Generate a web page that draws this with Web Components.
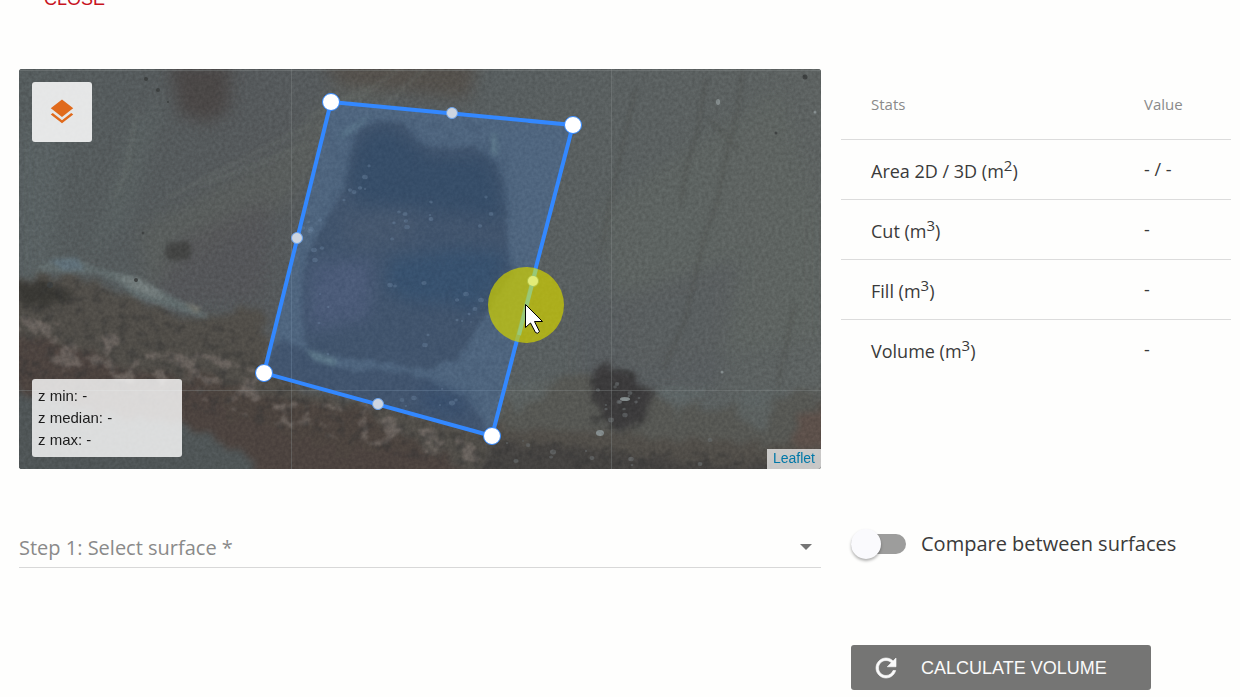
<!DOCTYPE html>
<html lang="en">
<head>
<meta charset="utf-8">
<meta name="viewport" content="width=device-width, initial-scale=1">
<title>Volume calculation</title>
<style>
  html {
    height: 100%;
    overflow: hidden;
  }
  body {
    margin: 0;
    background: #fefefd;
    color: #3a3a3a;
    font-family: "Open Sans", "Noto Sans", sans-serif;
    font-size: 18px;
  }
</style>
</head>
<body>

<volume-page>
  <flat-button slot="header" variant="text">Close</flat-button>
  <survey-map slot="map"></survey-map>
  <volume-stats slot="stats"></volume-stats>
  <surface-select slot="surface" label="Step 1: Select surface *"></surface-select>
  <toggle-switch slot="options">Compare between surfaces</toggle-switch>
  <flat-button slot="actions" variant="raised">
    <svg slot="icon" viewBox="0 0 24 24" width="30" height="30" fill="currentColor" stroke="currentColor" stroke-width=".5" aria-hidden="true">
      <path d="M17.65 6.35C16.2 4.9 14.21 4 12 4c-4.42 0-7.99 3.58-7.99 8s3.57 8 7.99 8c3.73 0 6.84-2.55 7.73-6h-2.08c-.82 2.33-3.04 4-5.65 4-3.31 0-6-2.69-6-6s2.69-6 6-6c1.66 0 3.14.69 4.22 1.78L13 11h7V4l-2.35 2.35z"/>
    </svg>
    Calculate volume
  </flat-button>
</volume-page>

<script>
class BaseElement extends HTMLElement {
  constructor() {
    super();
    this.attachShadow({mode: 'open'});
    this.shadowRoot.innerHTML = this.template();
  }

  template() {
    return '<slot></slot>';
  }
}

class VolumePage extends BaseElement {
  template() {
    return `<style>
      :host {
        display: grid;
        grid-template-columns: minmax(0, 1fr) 390px;
        column-gap: 20px;
        padding: 0 9px 0 19px;
      }
      /* the dialog is scrolled, so its header is partly out of view */
      header {
        grid-column: 1 / -1;
        margin: -24px 0 48px;
      }
      .form {
        padding-top: 50px;
      }
      .options {
        display: flex;
        flex-direction: column;
        align-items: flex-start;
        gap: 76px;
        padding: 50px 0 0 10px;
      }
    </style>
    <header><slot name="header"></slot></header>
    <slot name="map"></slot>
    <slot name="stats"></slot>
    <div class="form"><slot name="surface"></slot></div>
    <div class="options">
      <slot name="options"></slot>
      <slot name="actions"></slot>
    </div>`;
  }
}
window.customElements.define('volume-page', VolumePage);

class FlatButton extends BaseElement {
  template() {
    return `<style>
      :host {
        display: inline-block;
      }
      button {
        display: flex;
        align-items: center;
        gap: 20px;
        box-sizing: border-box;
        width: 100%;
        height: 45px;
        padding: 0 25px;
        border: 0;
        border-radius: 3px;
        background: none;
        color: #c8141e;
        font: 18px "Liberation Sans", Arial, sans-serif;
        text-transform: uppercase;
        cursor: pointer;
      }
      span {
        padding-top: 2px;
      }
      :host([variant="raised"]) {
        width: 300px;
      }
      :host([variant="raised"]) button {
        padding: 0 20px;
        background: #757574;
        color: #fafafa;
      }
      ::slotted(svg) {
        flex: none;
      }
    </style>
    <button type="button"><slot name="icon"></slot><span><slot></slot></span></button>`;
  }
}
window.customElements.define('flat-button', FlatButton);

class VolumeStats extends BaseElement {
  template() {
    const rows = [
      ['Area 2D / 3D (m<sup>2</sup>)', '- / -'],
      ['Cut (m<sup>3</sup>)', '-'],
      ['Fill (m<sup>3</sup>)', '-'],
      ['Volume (m<sup>3</sup>)', '-']
    ];
    return `<style>
      :host {
        display: block;
      }
      table {
        width: 100%;
        border-collapse: separate;
        border-spacing: 0;
        table-layout: fixed;
      }
      th, td {
        box-sizing: border-box;
        padding: 0 0 0 30px;
        text-align: left;
        font-weight: 400;
        vertical-align: middle;
      }
      th:last-child {
        width: 117px;
      }
      thead th {
        height: 70px;
        color: #8a8a8a;
        font-size: 15px;
      }
      tbody th, tbody td {
        height: 60px;
        padding-bottom: 2px;
        border-top: 1px solid #dcdcdc;
      }
      sup {
        font-size: 15px;
      }
    </style>
    <table aria-label="Volume stats">
      <thead><tr><th scope="col">Stats</th><th scope="col">Value</th></tr></thead>
      <tbody>
        ${rows.map(([name, value]) => `<tr><th scope="row">${name}</th><td>${value}</td></tr>`).join('')}
      </tbody>
    </table>`;
  }
}
window.customElements.define('volume-stats', VolumeStats);

class SurfaceSelect extends BaseElement {
  template() {
    return `<style>
      :host {
        display: grid;
        align-items: center;
        border-bottom: 1px solid #d8d8d8;
      }
      select, svg {
        grid-area: 1 / 1;
      }
      select {
        appearance: none;
        width: 100%;
        height: 48px;
        margin: 0;
        padding: 8px 40px 0 0;
        border: 0;
        background: none;
        color: #8a8a8a;
        font: inherit;
        font-size: 20px;
      }
      svg {
        justify-self: end;
        margin: 8px 9px 0 0;
        pointer-events: none;
      }
    </style>
    <select required><option></option></select>
    <svg width="12" height="6" viewBox="0 0 12 6" aria-hidden="true"><path d="M0 0h12L6 6z" fill="#757575"/></svg>`;
  }

  connectedCallback() {
    const label = this.getAttribute('label');
    const select = this.shadowRoot.querySelector('select');
    select.setAttribute('aria-label', label);
    select.options[0].textContent = label;
  }
}
window.customElements.define('surface-select', SurfaceSelect);

class ToggleSwitch extends BaseElement {
  template() {
    return `<style>
      :host {
        display: block;
        font-size: 20px;
      }
      label {
        display: flex;
        align-items: center;
        gap: 15px;
        height: 50px;
        cursor: pointer;
      }
      span {
        padding-bottom: 2px;
      }
      input {
        appearance: none;
        display: flex;
        align-items: center;
        flex: none;
        width: 55px;
        height: 20px;
        margin: 0;
        border-radius: 10px;
        background: #9d9d9c;
      }
      input::before {
        content: "";
        width: 30px;
        height: 30px;
        flex: none;
        border-radius: 50%;
        background: #fafafd;
        box-shadow: 0 2px 3px rgba(0, 0, 0, .3);
      }
      input:checked {
        justify-content: flex-end;
      }
    </style>
    <label><input type="checkbox" role="switch"><span><slot></slot></span></label>`;
  }
}
window.customElements.define('toggle-switch', ToggleSwitch);

class SurveyMap extends BaseElement {
  constructor() {
    super();
    this.__seed = 7;
    this.__scatterRocks();
  }

  template() {
    return `<style>
      :host {
        display: block;
        position: relative;
        height: 400px;
        overflow: hidden;
        border-radius: 3px;
        background: #575d5e;
        color: #1c1c1c;
        font: 15px/22px "Liberation Sans", Arial, sans-serif;
      }
      .canvas {
        display: block;
        width: 100%;
        height: 100%;
      }
      .canvas filter {
        color-interpolation-filters: sRGB;
      }
      .layers, .legend {
        position: absolute;
        left: 13px;
        border: 0;
        border-radius: 3px;
        background: rgba(255, 255, 255, .85);
      }
      .layers {
        top: 13px;
        display: grid;
        place-items: center;
        width: 60px;
        height: 60px;
        padding: 0;
        color: #e06a1c;
        cursor: pointer;
      }
      .legend {
        bottom: 12px;
        box-sizing: border-box;
        width: 150px;
        padding: 6px;
        background: rgba(255, 255, 255, .8);
      }
      .attribution {
        position: absolute;
        right: 0;
        bottom: 0;
        padding: 0 6px 2px;
        background: rgba(255, 255, 255, .7);
        font-size: 14px;
        line-height: 18px;
      }
      .attribution a {
        color: #0078a8;
        text-decoration: none;
      }
    </style>
    <svg class="canvas" viewBox="0 0 802 400" preserveAspectRatio="xMidYMid slice" role="img" aria-label="Survey area">
      <defs>
        <linearGradient id="ground" x1="0" y1="0" x2="1" y2="0">
          <stop offset="0" stop-color="#555c5d"/>
          <stop offset=".3" stop-color="#55595b"/>
          <stop offset=".6" stop-color="#585e5f"/>
          <stop offset="1" stop-color="#5d6261"/>
        </linearGradient>
        <filter id="rough" x="-10%" y="-10%" width="120%" height="120%">
          <feTurbulence type="fractalNoise" baseFrequency=".06" numOctaves="4" seed="3"/>
          <feDisplacementMap in="SourceGraphic" scale="24" xChannelSelector="R" yChannelSelector="G"/>
          <feGaussianBlur stdDeviation="3"/>
        </filter>
        <filter id="edge" x="-10%" y="-10%" width="120%" height="120%">
          <feTurbulence type="fractalNoise" baseFrequency=".08" numOctaves="3" seed="3"/>
          <feDisplacementMap in="SourceGraphic" scale="10" xChannelSelector="R" yChannelSelector="G"/>
          <feGaussianBlur stdDeviation="2"/>
        </filter>
        <filter id="soft" x="-20%" y="-20%" width="140%" height="140%"><feGaussianBlur stdDeviation="8"/></filter>
        <filter id="smooth" x="-20%" y="-20%" width="140%" height="140%"><feGaussianBlur stdDeviation="2"/></filter>
        <filter id="patches" x="0" y="0" width="100%" height="100%">
          <feTurbulence type="fractalNoise" baseFrequency=".05 .06" numOctaves="4" seed="11"/>
          <feColorMatrix values="0 0 0 0 .45  0 0 0 0 .42  0 0 0 0 .4  9 0 0 0 -5"/>
          <feComposite in2="SourceAlpha" operator="in"/>
          <feGaussianBlur stdDeviation=".8"/>
        </filter>
        <filter id="clods" x="0" y="0" width="100%" height="100%">
          <feTurbulence type="fractalNoise" baseFrequency=".11" numOctaves="3" seed="5"/>
          <feColorMatrix values="0 0 0 0 .2  0 0 0 0 .2  0 0 0 0 .2  0 6 0 0 -3.1"/>
          <feComposite in2="SourceAlpha" operator="in"/>
          <feGaussianBlur stdDeviation=".8"/>
        </filter>
        <filter id="grain" x="0" y="0" width="100%" height="100%">
          <feTurbulence type="fractalNoise" baseFrequency=".3" numOctaves="2" seed="9"/>
          <feColorMatrix values="1 0 0 0 0  1 0 0 0 0  1 0 0 0 0  0 0 0 0 1"/>
        </filter>
        <clipPath id="area"><path d="M312 33 554 56 473 367 245 304z"/></clipPath>
      </defs>

      <rect width="802" height="400" fill="url(#ground)"/>
      <g filter="url(#soft)">
        <path d="M0 60 50 40 30 200 0 260z" fill="#5b6466" opacity=".6"/>
        <path d="M70 190 110 60 150 20 110 150z" fill="#5d6566" opacity=".45"/>
        <path d="M120 160 270 80 330 0 400 0 260 140 130 220z" fill="#5d605d" opacity=".55"/>
        <path d="M160 170 250 130 245 230 130 240z" fill="#535255" opacity=".5"/>
        <path d="M580 140 760 20 802 140 802 270 610 300z" fill="#606562" opacity=".5"/>
        <path d="M560 240 720 190 700 320 560 320z" fill="#555a5e" opacity=".5"/>
        <path d="M300-10h160l-10 40-130-14z" fill="#524c44" opacity=".7"/>
        <path d="M150-5 212-5 210 42 188 54 160 45z" fill="#494544" opacity=".9"/>
      </g>

      <!-- earth band along the bottom -->
      <g filter="url(#rough)">
        <path d="M-20 206 50 207 110 225 170 250 245 240 250 318 480 350 600 360 700 372 830 320 830 430 -20 430z" fill="#514e49"/>
        <path d="M-20 235 60 245 120 260 240 285 300 335 250 360 110 310-20 300z" fill="#504d48"/>
        <path d="M-20 262 60 280 110 302 210 320 300 345 430 390 450 420 240 420 170 390 110 350-20 320z" fill="#4c433f"/>
        <path d="M160 300 270 330 350 340 400 380 320 385 210 350z" fill="#4c443f"/>
        <path d="M-20 312 90 346 170 356 220 380 250 420-20 420z" fill="#4f5556"/>
        <path d="M485 322 560 305 640 330 700 340 802 318 780 375 690 375 560 360 480 360z" fill="#565753"/>
        <path d="M480 374 560 378 640 388 720 398 830 380 830 420 440 420z" fill="#454341"/>
        <path d="M-20 210 18 211 55 220 50 237 15 234-20 226z" fill="#393834"/>
        <path d="M778 345 820 330 820 385 766 375z" fill="#5c504a"/>
      </g>
      <path d="M-5 245 80 262 200 288 245 304 350 335 440 358 470 395 330 372 240 352 150 318-5 300z" filter="url(#patches)" opacity=".7"/>
      <path d="M-5 212 60 210 120 235 180 250 245 260 245 304 473 367 600 378 800 390 800 400 440 400 190 345-5 310z" filter="url(#clods)" opacity=".4"/>
      <path d="M640 320 690 318 660 350zM720 330 760 320 744 366 720 350zM480 316 540 310 500 345z" fill="#60696a" opacity=".55" filter="url(#rough)"/>

      <!-- pale streaks of chalk -->
      <g filter="url(#smooth)">
        <path d="M14 202Q34 184 58 189L78 199 112 206 140 220 160 231 188 246 190 250 170 244 140 236 116 228 100 214 78 204 50 204z" fill="#616b6c"/>
        <path d="M96 207 118 208 138 220 148 230 132 228 114 220z" fill="#727b7b"/>
        <path d="M165 233 182 239 178 245z" fill="#76776f"/>
        <path d="M30 191 58 189 66 200 45 202z" fill="#5f6f78"/>
      </g>

      <!-- dark spots -->
      <ellipse cx="159" cy="182" rx="13" ry="10" fill="#434443" filter="url(#edge)"/>
      <path d="M562 306 576 294 608 304 626 325 618 348 594 362 574 350 566 326z" fill="#3c3b3c" filter="url(#rough)" transform="translate(8 2)"/>
      <path d="M570 300 620 300 626 360 570 360z" filter="url(#clods)" opacity=".5"/>
      <g fill="#3d4040">
        <circle cx="127" cy="10" r="2"/><circle cx="139" cy="21" r="2"/><circle cx="149" cy="33" r="1"/>
        <circle cx="124" cy="164" r="1.500"/><circle cx="786" cy="8" r="2.5"/><circle cx="117" cy="211" r="2"/>
        <circle cx="31" cy="216" r="3"/><circle cx="757" cy="64" r="1.5"/>
      </g>
      <g fill="#838b8c">
        <circle cx="796" cy="43" r="1.5"/><ellipse cx="699" cy="33" rx="2" ry="3"/><circle cx="703" cy="303" r="1.5"/>
        <ellipse cx="581" cy="364" rx="4" ry="3"/><ellipse cx="606" cy="330" rx="5" ry="2"/>
      </g>

      <!-- wheel tracks -->
      <g fill="none" stroke="#4a4b48" stroke-width="3" opacity=".45" filter="url(#smooth)">
        <path d="M724 0 719 40 708 85 698 135 686 165 665 255 644 300"/>
        <path d="M687 10 678 65 668 95 662 135"/>
        <path d="M617 20 604 75 594 120 582 185"/>
        <path d="M776 235 762 300 756 330M690 50 720 80"/>
      </g>
      <g fill="none" stroke="#727974" stroke-width="2" opacity=".5" filter="url(#smooth)">
        <path d="M322 72 356 45 405 0M290 48 350 18M150 128 292 55M95 130 108 100 118 40"/>
        <path d="M298 60 350 22 380 0M185 115 290 75"/>
      </g>

      <!-- stockpile inside the measured area -->
      <g clip-path="url(#area)">
        <rect x="240" y="30" width="320" height="340" fill="#585c5b"/>
        <g filter="url(#edge)">
          <path d="M340 62 362 52 384 56 400 72 408 80 430 78 462 80 476 94 482 110 488 155 492 205 470 240 452 270 436 290 415 300 385 298 350 290 288 288 282 240 288 185 308 150 326 118 332 84z" fill="#474745"/>
          <path d="M262 270 286 282 320 300 360 302 390 304 430 320 452 336 480 370 380 360 240 310z" fill="#474746"/>
        </g>
        <g filter="url(#soft)">
          <path d="M340 70 364 58 394 72 410 88 470 88 482 120 484 150 430 142 340 134 330 115z" fill="#393e3f"/>
          <path d="M370 190 440 180 490 185 478 222 450 245 440 235 390 232 368 220z" fill="#3a4347"/>
          <path d="M292 195 355 190 350 250 288 262z" fill="#545054"/>
          <path d="M320 145 400 142 390 175 330 180z" fill="#4d4b47"/>
          <path d="M400 318 440 325 452 345 410 345z" fill="#3c4146"/>
        </g>
        <g filter="url(#smooth)">
          <path d="M286 281 306 285 320 292 314 297 295 291z" fill="#697268"/>
          <path d="M318 66 352 44 345 54 324 70z" fill="#646d68"/>
          <path d="M472 64 478 64 479 88 472 84z" fill="#656e66"/>
        </g>
        <rect x="280" y="50" width="210" height="320" filter="url(#clods)" opacity=".14"/>
      </g>
      <g id="rocks"></g>
      <rect width="802" height="400" filter="url(#grain)" opacity=".14" style="mix-blend-mode: overlay"/>

      <!-- tile seams -->
      <path d="M0 1.5H802M272.5 0V400M592.5 0V400M0 321.5H802" stroke="#8a9090" stroke-opacity=".35" fill="none"/>

      <path d="M312 33 554 56 473 367 245 304z" fill="#3388ff" fill-opacity=".22" stroke="#3388ff" stroke-width="4" stroke-linejoin="round"/>
      <g fill="#fff" stroke="#3388ff" stroke-width="1">
        <circle cx="312" cy="33" r="8.5"/><circle cx="554" cy="56" r="8.5"/>
        <circle cx="473" cy="367" r="8.5"/><circle cx="245" cy="304" r="8.5"/>
      </g>
      <g fill="#cdd5e0" stroke="#6ba3ee" stroke-width="1">
        <circle cx="433" cy="44" r="5.5"/><circle cx="514" cy="212" r="5.5"/>
        <circle cx="359" cy="335" r="5.5"/><circle cx="278" cy="169" r="5.5"/>
      </g>

      <!-- pointer with its click highlight -->
      <circle cx="507" cy="236" r="38" fill="#d0d000" fill-opacity=".7"/>
      <path d="M517 200 500 266" stroke="#98c878" stroke-width="4"/>
      <circle cx="514" cy="212" r="5" fill="#e2ec78"/>
      <path d="M506.5 235.5v23l5-4.5 5 9.5q2 2 4-1l-5-10h8z" fill="#fff" stroke="#000" stroke-width="1"/>
    </svg>
    <button class="layers" type="button" aria-label="Layers">
      <svg viewBox="0 0 24 24" width="30" height="30" fill="currentColor" aria-hidden="true">
        <path d="M11.99 18.54l-7.37-5.73L3 14.07l9 7 9-7-1.63-1.27-7.38 5.74zM12 16l7.36-5.73L21 9l-9-7-9 7 1.63 1.27L12 16z"/>
      </svg>
    </button>
    <div class="legend">
      <div>z min: -</div>
      <div>z median: -</div>
      <div>z max: -</div>
    </div>
    <div class="attribution"><a href="#leaflet">Leaflet</a></div>`;
  }

  __random() {
    this.__seed = (this.__seed * 16807) % 2147483647;
    return this.__seed / 2147483647;
  }

  __scatterRocks() {
    // x, y, width, height, count
    const fields = [
      [325, 85, 30, 50, 7],
      [283, 145, 22, 50, 8],
      [340, 125, 140, 50, 12],
      [300, 205, 120, 80, 9],
      [430, 225, 35, 30, 8],
      [380, 300, 60, 40, 7],
      [578, 308, 44, 44, 14],
      [480, 370, 220, 28, 12]
    ];
    let markup = '';
    for (const [x, y, w, h, count] of fields) {
      for (let i = 0; i < count; i++) {
        const cx = Math.round(x + this.__random() * w);
        const cy = Math.round(y + this.__random() * h);
        const r = 1 + this.__random() * 2;
        markup += `<ellipse cx="${cx}" cy="${cy}" rx="${r.toFixed(1)}" ry="${(r * .8).toFixed(1)}" fill="#7c8486" opacity=".4"/>`;
      }
    }
    this.shadowRoot.querySelector('#rocks').innerHTML = markup;
  }
}
window.customElements.define('survey-map', SurveyMap);
</script>
</body>
</html>
